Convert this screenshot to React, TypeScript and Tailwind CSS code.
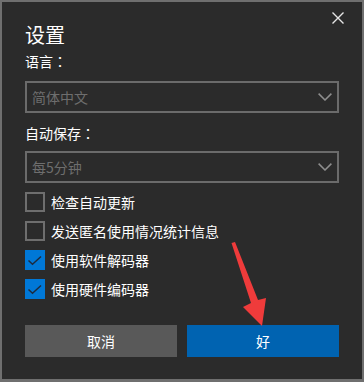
const font = { fontFamily: '"Noto Sans CJK SC", "Noto Sans", sans-serif' };
const tcFont = { fontFamily: '"Noto Sans CJK TC", "Noto Sans CJK SC", sans-serif' };

function Select({ value }: { value: string }) {
  return (
    <div className="flex h-[32px] w-full items-center justify-between border-2 border-[#6b6b6b] pl-[5px] pr-[5px]">
      <span className="text-[14px] leading-[20px] text-[#6e6e6e]">{value}</span>
      <svg width="14" height="8" viewBox="0 0 14 8" fill="none">
        <path d="M0.6 0.6 L7 7 L13.4 0.6" stroke="#8e8e8e" strokeWidth="1.5" />
      </svg>
    </div>
  );
}

function Check({ label, checked }: { label: string; checked?: boolean }) {
  return (
    <label className="flex h-[20px] items-center gap-[6px]">
      {checked ? (
        <span className="flex h-[20px] w-[20px] items-center justify-center bg-[#0078d7]">
          <svg width="20" height="20" viewBox="0 0 20 20" fill="none">
            <path d="M3.5 10.5 L7.5 14.2 L16 6.5" stroke="#1c2b3f" strokeWidth="1.5" />
          </svg>
        </span>
      ) : (
        <span className="h-[20px] w-[20px] border-2 border-[#6e6e6e]" />
      )}
      <span className="text-[14px] leading-[20px] text-white">{label}</span>
    </label>
  );
}

function FieldLabel({ text, className }: { text: string; className: string }) {
  return (
    <div className={`text-[14px] leading-[20px] text-white ${className}`}>
      {text}
      <span style={tcFont}>：</span>
    </div>
  );
}

export default function App() {
  return (
    <div
      style={font}
      className="relative h-[382px] w-[364px] border-x-2 border-t-2 border-b-[3px] border-[#6f6f6f] bg-[#2b2b2b] px-[23px]"
    >
      <div className="flex items-start justify-between">
        <h1 className="mt-[19px] text-[20px] font-normal leading-[28px] text-white">设置</h1>
        <button className="-mr-[7px] mt-[8px] flex h-[16px] w-[16px] items-center justify-center">
          <svg width="12" height="12" viewBox="0 0 12 12" fill="none">
            <path d="M0.5 0.5 L11.5 11.5 M11.5 0.5 L0.5 11.5" stroke="#e6e6e6" strokeWidth="1.4" />
          </svg>
        </button>
      </div>

      <FieldLabel text="语言" className="mt-[2px]" />
      <div className="mt-[10px]">
        <Select value="简体中文" />
      </div>

      <FieldLabel text="自动保存" className="mt-[10px]" />
      <div className="mt-[8px]">
        <Select value="每5分钟" />
      </div>

      <div className="mt-[9px] flex flex-col gap-[9px]">
        <Check label="检查自动更新" />
        <Check label="发送匿名使用情况统计信息" />
        <Check label="使用软件解码器" checked />
        <Check label="使用硬件编码器" checked />
      </div>

      <div className="mt-[26px] flex gap-[10px]">
        <button className="h-[32px] flex-1 bg-[#595959] text-[14px] text-white">取消</button>
        <button className="h-[32px] flex-1 bg-[#0063b1] text-[14px] text-white">好</button>
      </div>

      <svg
        className="pointer-events-none absolute left-[-2px] top-[-2px]"
        width="364"
        height="382"
        viewBox="0 0 364 382"
      >
        <polygon
          points="231.5,243 235,242 258,300 266,298 262,326 243,307 251,303"
          fill="#ef3b3b"
        />
      </svg>
    </div>
  );
}
